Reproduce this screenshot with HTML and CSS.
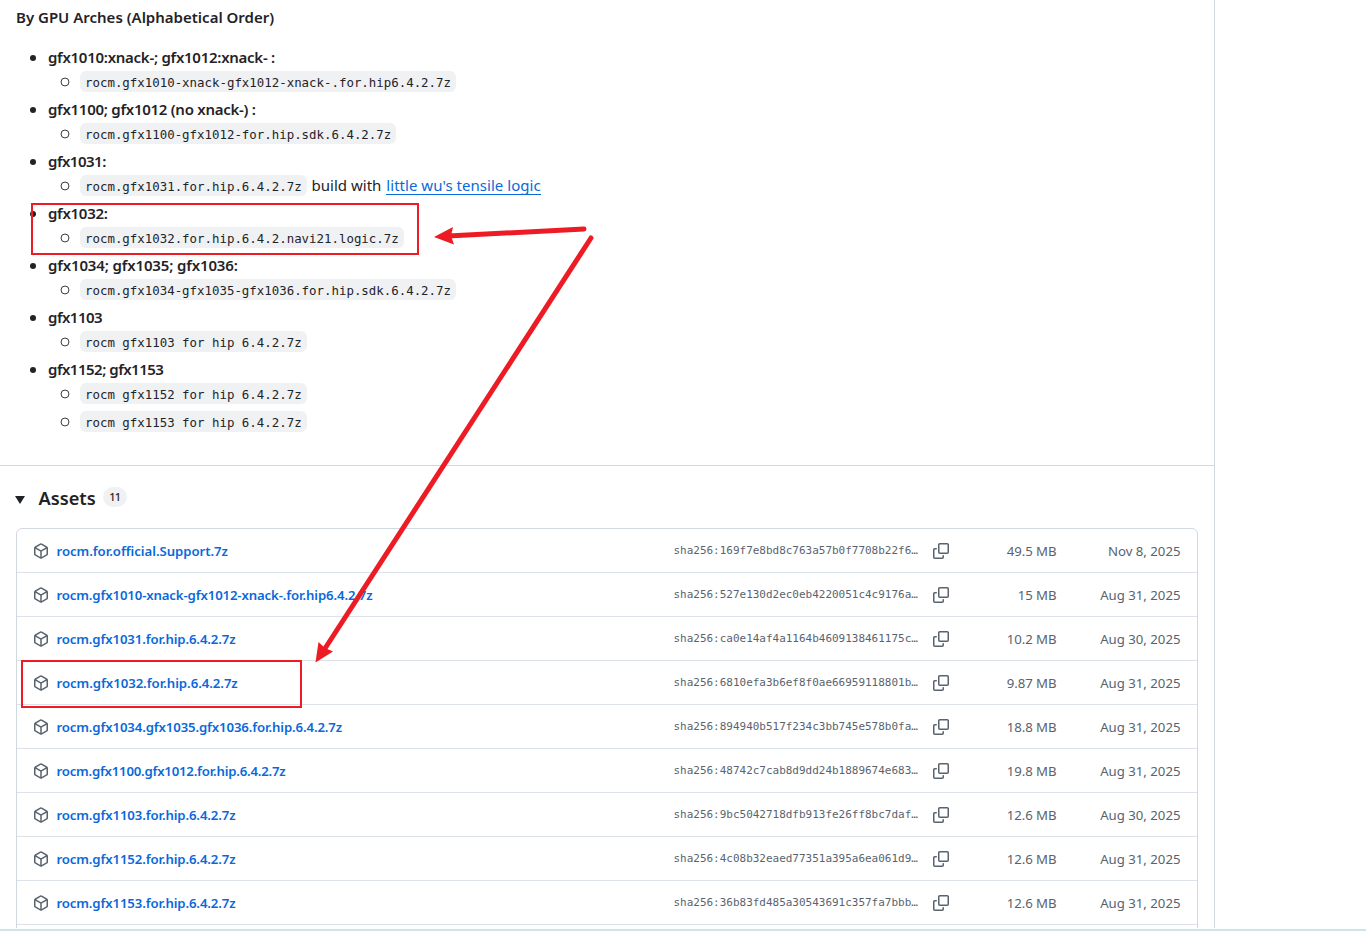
FILE: index.html
```
<!DOCTYPE html>
<html lang="en">
<head>
<meta charset="utf-8">
<title>Release assets</title>
<link rel="stylesheet" href="styles.css">
</head>
<body>
<svg class="defs" aria-hidden="true">
  <symbol id="package" viewBox="0 0 16 16"><path d="m8.878.392 5.25 3.045c.54.314.872.89.872 1.514v6.098a1.75 1.75 0 0 1-.872 1.514l-5.25 3.045a1.75 1.75 0 0 1-1.756 0l-5.25-3.045A1.75 1.75 0 0 1 1 11.049V4.951c0-.624.332-1.201.872-1.514L7.122.392a1.75 1.75 0 0 1 1.756 0ZM7.875 1.69l-4.63 2.685L8 7.133l4.755-2.758-4.63-2.685a.248.248 0 0 0-.25 0ZM2.5 5.677v5.372c0 .09.047.171.125.216l4.625 2.683V8.432Zm6.25 8.271 4.625-2.683a.25.25 0 0 0 .125-.216V5.677L8.75 8.432Z"/></symbol>
  <symbol id="copy" viewBox="0 0 16 16"><path d="M0 6.75C0 5.784.784 5 1.75 5h1.5a.75.75 0 0 1 0 1.5h-1.5a.25.25 0 0 0-.25.25v7.5c0 .138.112.25.25.25h7.5a.25.25 0 0 0 .25-.25v-1.5a.75.75 0 0 1 1.5 0v1.5A1.75 1.75 0 0 1 9.25 16h-7.5A1.75 1.75 0 0 1 0 14.25Z"/><path d="M5 1.75C5 .784 5.784 0 6.75 0h7.5C15.216 0 16 .784 16 1.75v7.5A1.75 1.75 0 0 1 14.25 11h-7.5A1.75 1.75 0 0 1 5 9.25Zm1.75-.25a.25.25 0 0 0-.25.25v7.5c0 .138.112.25.25.25h7.5a.25.25 0 0 0 .25-.25v-7.5a.25.25 0 0 0-.25-.25Z"/></symbol>
</svg>
<main class="release">
  <section class="notes">
    <p class="notes-title">By GPU Arches (Alphabetical Order)</p>
    <ul class="arches">
      <li><b>gfx1010:xnack-; gfx1012:xnack- :</b><ul><li><code>rocm.gfx1010-xnack-gfx1012-xnack-.for.hip6.4.2.7z</code></li></ul></li>
      <li><b>gfx1100; gfx1012 (no xnack-) :</b><ul><li><code>rocm.gfx1100-gfx1012-for.hip.sdk.6.4.2.7z</code></li></ul></li>
      <li><b class="tight">gfx1031:</b><ul><li><code>rocm.gfx1031.for.hip.6.4.2.7z</code><span class="with">build with</span><a class="logic" href="#">little wu's tensile logic</a></li></ul></li>
      <li><b>gfx1032:</b><ul><li><code>rocm.gfx1032.for.hip.6.4.2.navi21.logic.7z</code></li></ul></li>
      <li><b class="loose">gfx1034; gfx1035; gfx1036:</b><ul><li><code>rocm.gfx1034-gfx1035-gfx1036.for.hip.sdk.6.4.2.7z</code></li></ul></li>
      <li><b class="tight">gfx1103</b><ul><li><code>rocm gfx1103 for hip 6.4.2.7z</code></li></ul></li>
      <li><b class="tight">gfx1152; gfx1153</b><ul><li><code>rocm gfx1152 for hip 6.4.2.7z</code></li><li><code>rocm gfx1153 for hip 6.4.2.7z</code></li></ul></li>
    </ul>
  </section>
  <section class="assets">
    <h2 class="assets-head"><span class="caret"></span><span class="assets-title">Assets</span><span class="counter">11</span></h2>
    <div class="box">
      <div class="row"><svg class="icon"><use href="#package"/></svg><a class="name loose" href="#">rocm.for.official.Support.7z</a><span class="sha">sha256:169f7e8bd8c763a57b0f7708b22f6…</span><svg class="icon copy"><use href="#copy"/></svg><span class="size">49.5 MB</span><span class="date">Nov 8, 2025</span></div>
      <div class="row"><svg class="icon"><use href="#package"/></svg><a class="name" href="#">rocm.gfx1010-xnack-gfx1012-xnack-.for.hip6.4.2.7z</a><span class="sha">sha256:527e130d2ec0eb4220051c4c9176a…</span><svg class="icon copy"><use href="#copy"/></svg><span class="size">15 MB</span><span class="date">Aug 31, 2025</span></div>
      <div class="row"><svg class="icon"><use href="#package"/></svg><a class="name" href="#">rocm.gfx1031.for.hip.6.4.2.7z</a><span class="sha">sha256:ca0e14af4a1164b4609138461175c…</span><svg class="icon copy"><use href="#copy"/></svg><span class="size">10.2 MB</span><span class="date">Aug 30, 2025</span></div>
      <div class="row"><svg class="icon"><use href="#package"/></svg><a class="name loose" href="#">rocm.gfx1032.for.hip.6.4.2.7z</a><span class="sha">sha256:6810efa3b6ef8f0ae66959118801b…</span><svg class="icon copy"><use href="#copy"/></svg><span class="size">9.87 MB</span><span class="date">Aug 31, 2025</span></div>
      <div class="row"><svg class="icon"><use href="#package"/></svg><a class="name" href="#">rocm.gfx1034.gfx1035.gfx1036.for.hip.6.4.2.7z</a><span class="sha">sha256:894940b517f234c3bb745e578b0fa…</span><svg class="icon copy"><use href="#copy"/></svg><span class="size">18.8 MB</span><span class="date">Aug 31, 2025</span></div>
      <div class="row"><svg class="icon"><use href="#package"/></svg><a class="name tight" href="#">rocm.gfx1100.gfx1012.for.hip.6.4.2.7z</a><span class="sha">sha256:48742c7cab8d9dd24b1889674e683…</span><svg class="icon copy"><use href="#copy"/></svg><span class="size">19.8 MB</span><span class="date">Aug 31, 2025</span></div>
      <div class="row"><svg class="icon"><use href="#package"/></svg><a class="name" href="#">rocm.gfx1103.for.hip.6.4.2.7z</a><span class="sha">sha256:9bc5042718dfb913fe26ff8bc7daf…</span><svg class="icon copy"><use href="#copy"/></svg><span class="size">12.6 MB</span><span class="date">Aug 30, 2025</span></div>
      <div class="row"><svg class="icon"><use href="#package"/></svg><a class="name" href="#">rocm.gfx1152.for.hip.6.4.2.7z</a><span class="sha">sha256:4c08b32eaed77351a395a6ea061d9…</span><svg class="icon copy"><use href="#copy"/></svg><span class="size">12.6 MB</span><span class="date">Aug 31, 2025</span></div>
      <div class="row"><svg class="icon"><use href="#package"/></svg><a class="name" href="#">rocm.gfx1153.for.hip.6.4.2.7z</a><span class="sha">sha256:36b83fd485a30543691c357fa7bbb…</span><svg class="icon copy"><use href="#copy"/></svg><span class="size">12.6 MB</span><span class="date">Aug 31, 2025</span></div>
    </div>
  </section>
</main>
<footer class="edge"></footer>
<svg class="marks" viewBox="0 0 1366 931" aria-hidden="true">
  <rect x="32" y="204" width="386" height="50"/>
  <rect x="22" y="661" width="279" height="46"/>
  <path class="shaft" d="M584 229 448 236M591 238 324 650"/>
  <path class="head" d="M434 237 453 227 451 236 454 244.500ZM315.500 662.500 318.500 642 325 648 333 651.500Z"/>
</svg>
</body>
</html>
```
FILE: styles.css
```
* { box-sizing: border-box; }
body {
  margin: 0;
  height: 931px;
  overflow: hidden;
  background: #fff;
  color: #1f2328;
  font-family: "Noto Sans", sans-serif;
  font-size: 15px;
  line-height: 24px;
}
a { color: #0969da; text-decoration: none; }
ul { list-style: none; margin: 0; padding: 0; }
.defs { position: absolute; width: 0; height: 0; }
.release {
  width: 1215px;
  height: 928px;
  overflow: hidden;
  border-right: 1px solid #d1d9e0;
}
.notes { height: 466px; padding: 5px 16px 0; border-bottom: 1px solid #d1d9e0; }
.notes-title { margin: 0 0 16px; font-weight: 600; }
.arches b { font-weight: 600; display: block; width: max-content; letter-spacing: -0.27px; }
.arches b.tight { letter-spacing: -0.5px; }
.arches b.loose { letter-spacing: -0.14px; }
.arches > li { padding-left: 32px; }
.arches > li + li, .arches ul li + li { margin-top: 4px; }
.arches > li::before {
  content: "";
  float: left;
  width: 6px;
  height: 6px;
  margin: 10px 0 0 -18px;
  border-radius: 50%;
  background: #1f2328;
}
.arches ul li { display: flex; align-items: center; height: 24px; padding-left: 13px; }
.arches ul li::before {
  content: "";
  width: 8px;
  height: 8px;
  margin: 2px 11px 0 0;
  border: 1.4px solid #1f2328;
  border-radius: 50%;
  transform: scale(0.88);
}
.arches ul li::before, code { flex: none; }
.arches ul { margin-left: -1px; }
code {
  height: 21px;
  margin: 1px 0 0 -1px;
  padding: 1px 5px 0;
  border-radius: 6px;
  background: #eff1f3;
  font: 12.42px/22px "DejaVu Sans Mono", monospace;
  white-space: pre;
}
.with { margin: 0 5px; }
.logic { line-height: 18px; letter-spacing: 0.03px; border-bottom: 1px solid #0969da; }
.assets { padding: 16px; }
.assets-head { display: flex; align-items: center; height: 32px; margin: 0 0 14px -1px; font-weight: 600; }
.caret { margin-top: 3px; border: 5px solid transparent; border-top: 8px solid #1f2328; border-bottom: 0; }
.assets-title { margin: 0 7px 0 13.5px; font-size: 18.2px; }
.counter {
  width: 24px;
  height: 20px;
  margin-top: -2px;
  border-radius: 10px;
  background: #eff1f3;
  font-size: 11px;
  font-weight: 500;
  letter-spacing: -0.8px;
  line-height: 20px;
  text-align: center;
}
.box { width: 1182px; height: 420px; border: 1px solid #d1d9e0; border-radius: 6px 6px 0 0; }
.row {
  display: flex;
  align-items: center;
  height: 44px;
  padding: 0 16px;
  border-bottom: 1px solid #dce2e8;
  color: #59636e;
  font-size: 13.2px;
}
.icon { flex: none; width: 16px; height: 16px; fill: #59636e; }
.name { width: 617px; margin-left: 7.5px; font-size: 13.2px; font-weight: 600; letter-spacing: -0.13px; white-space: nowrap; }
.name.loose { letter-spacing: -0.05px; }
.name.tight { letter-spacing: -0.22px; }
.sha { width: 259.5px; font: 10.97px/20px "DejaVu Sans Mono", monospace; white-space: nowrap; }
.size { width: 107.5px; text-align: right; letter-spacing: -0.05px; }
.date { width: 124px; text-align: right; }
.edge { height: 3px; border-top: 1px solid #fff; background: #d1e2ec; }
.marks { position: absolute; inset: 0; width: 1366px; height: 931px; pointer-events: none; }
.marks rect { fill: none; stroke: #ed1c24; stroke-width: 2; }
.shaft { fill: none; stroke: #ed1c24; stroke-width: 5; stroke-linecap: round; }
.head { fill: #ed1c24; }
```
